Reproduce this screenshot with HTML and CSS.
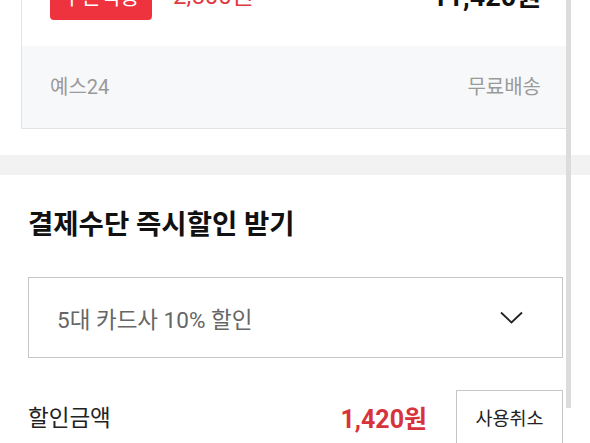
FILE: index.html
```html
<!DOCTYPE html>
<html lang="ko">
<head>
<meta charset="utf-8">
<link rel="stylesheet" href="styles.css">
</head>
<body>
<div class="page">
  <div class="card">
    <div class="card-top">
      <span class="badge">쿠폰적용</span>
      <span class="sale">2,500원</span>
      <span class="price">11,420원</span>
    </div>
    <div class="card-foot">
      <span>예스24</span>
      <span>무료배송</span>
    </div>
  </div>
  <div class="band"></div>
  <section class="pay">
    <h2 class="pay-title">결제수단 즉시할인 받기</h2>
    <div class="select">
      <span class="select-text">5대 카드사 10% 할인</span>
      <svg class="chevron" width="23" height="13" viewBox="0 0 23 13"><path d="M1 1.5 L11.5 11.5 L22 1.5" fill="none" stroke="#222" stroke-width="1.8"/></svg>
    </div>
    <div class="amount-row">
      <span class="amount-label">할인금액</span>
      <span class="amount">1,420원</span>
      <button class="cancel">사용취소</button>
    </div>
  </section>
</div>
<div class="scrollbar"></div>
</body>
</html>
```
FILE: styles.css
```css
html, body {
  margin: 0;
  padding: 0;
  background: #fff;
  overflow: hidden;
  font-family: Roboto, "Noto Sans CJK KR", sans-serif;
}
.page {
  margin-top: -40px;
  width: 590px;
}
.card {
  margin: 0 21px;
  border: 1px solid #e3e3e3;
  border-top: none;
}
.card-top {
  height: 86px;
  box-sizing: border-box;
  display: flex;
  align-items: flex-end;
  padding: 0 27px 26px 28px;
}
.badge {
  width: 102px;
  height: 40px;
  box-sizing: border-box;
  padding-bottom: 10px;
  display: flex;
  align-items: center;
  justify-content: center;
  background: #ee323e;
  color: #fff;
  border-radius: 4px;
  font-size: 21px;
}
.sale {
  margin-left: 21px;
  margin-bottom: 12px;
  font-size: 24px;
  line-height: 1;
  color: #df3a44;
}
.price {
  margin-left: auto;
  margin-bottom: 9px;
  font-size: 27px;
  line-height: 1;
  font-weight: 700;
  color: #111;
}
.card-foot {
  height: 82px;
  display: flex;
  align-items: center;
  justify-content: space-between;
  padding: 0 27px 4px 28px;
  box-sizing: border-box;
  background: #f7f8f9;
  font-size: 20px;
  color: #9a9a9a;
}
.band {
  margin-top: 26px;
  height: 20px;
  background: #f2f2f2;
}
.pay {
  padding: 0 27px 0 28px;
}
.pay-title {
  margin: 32px 0 0;
  font-size: 27.5px;
  line-height: 36px;
  font-weight: 700;
  color: #111;
}
.select {
  margin-top: 34px;
  height: 81px;
  box-sizing: border-box;
  border: 1px solid #c6c6c6;
  display: flex;
  align-items: center;
  justify-content: space-between;
  padding: 0 39px 0 28px;
}
.select-text {
  font-size: 22.5px;
  color: #666;
}
.chevron {
  display: block;
}
.amount-row {
  margin-top: 32px;
  display: flex;
  align-items: center;
}
.amount-label {
  font-size: 22.5px;
  color: #222;
  margin-bottom: 8px;
}
.amount {
  margin-left: auto;
  margin-right: 29px;
  margin-bottom: 6px;
  font-size: 25px;
  font-weight: 700;
  color: #d7333c;
}
.cancel {
  width: 107px;
  height: 60px;
  box-sizing: border-box;
  border: 1px solid #c6c6c6;
  background: #fff;
  font-family: Roboto, "Noto Sans CJK KR", sans-serif;
  font-size: 18.5px;
  color: #222;
  padding: 0 0 6px;
}
.scrollbar {
  position: fixed;
  left: 566px;
  top: 0;
  width: 5px;
  height: 408px;
  background: #dcdcdc;
}
```
